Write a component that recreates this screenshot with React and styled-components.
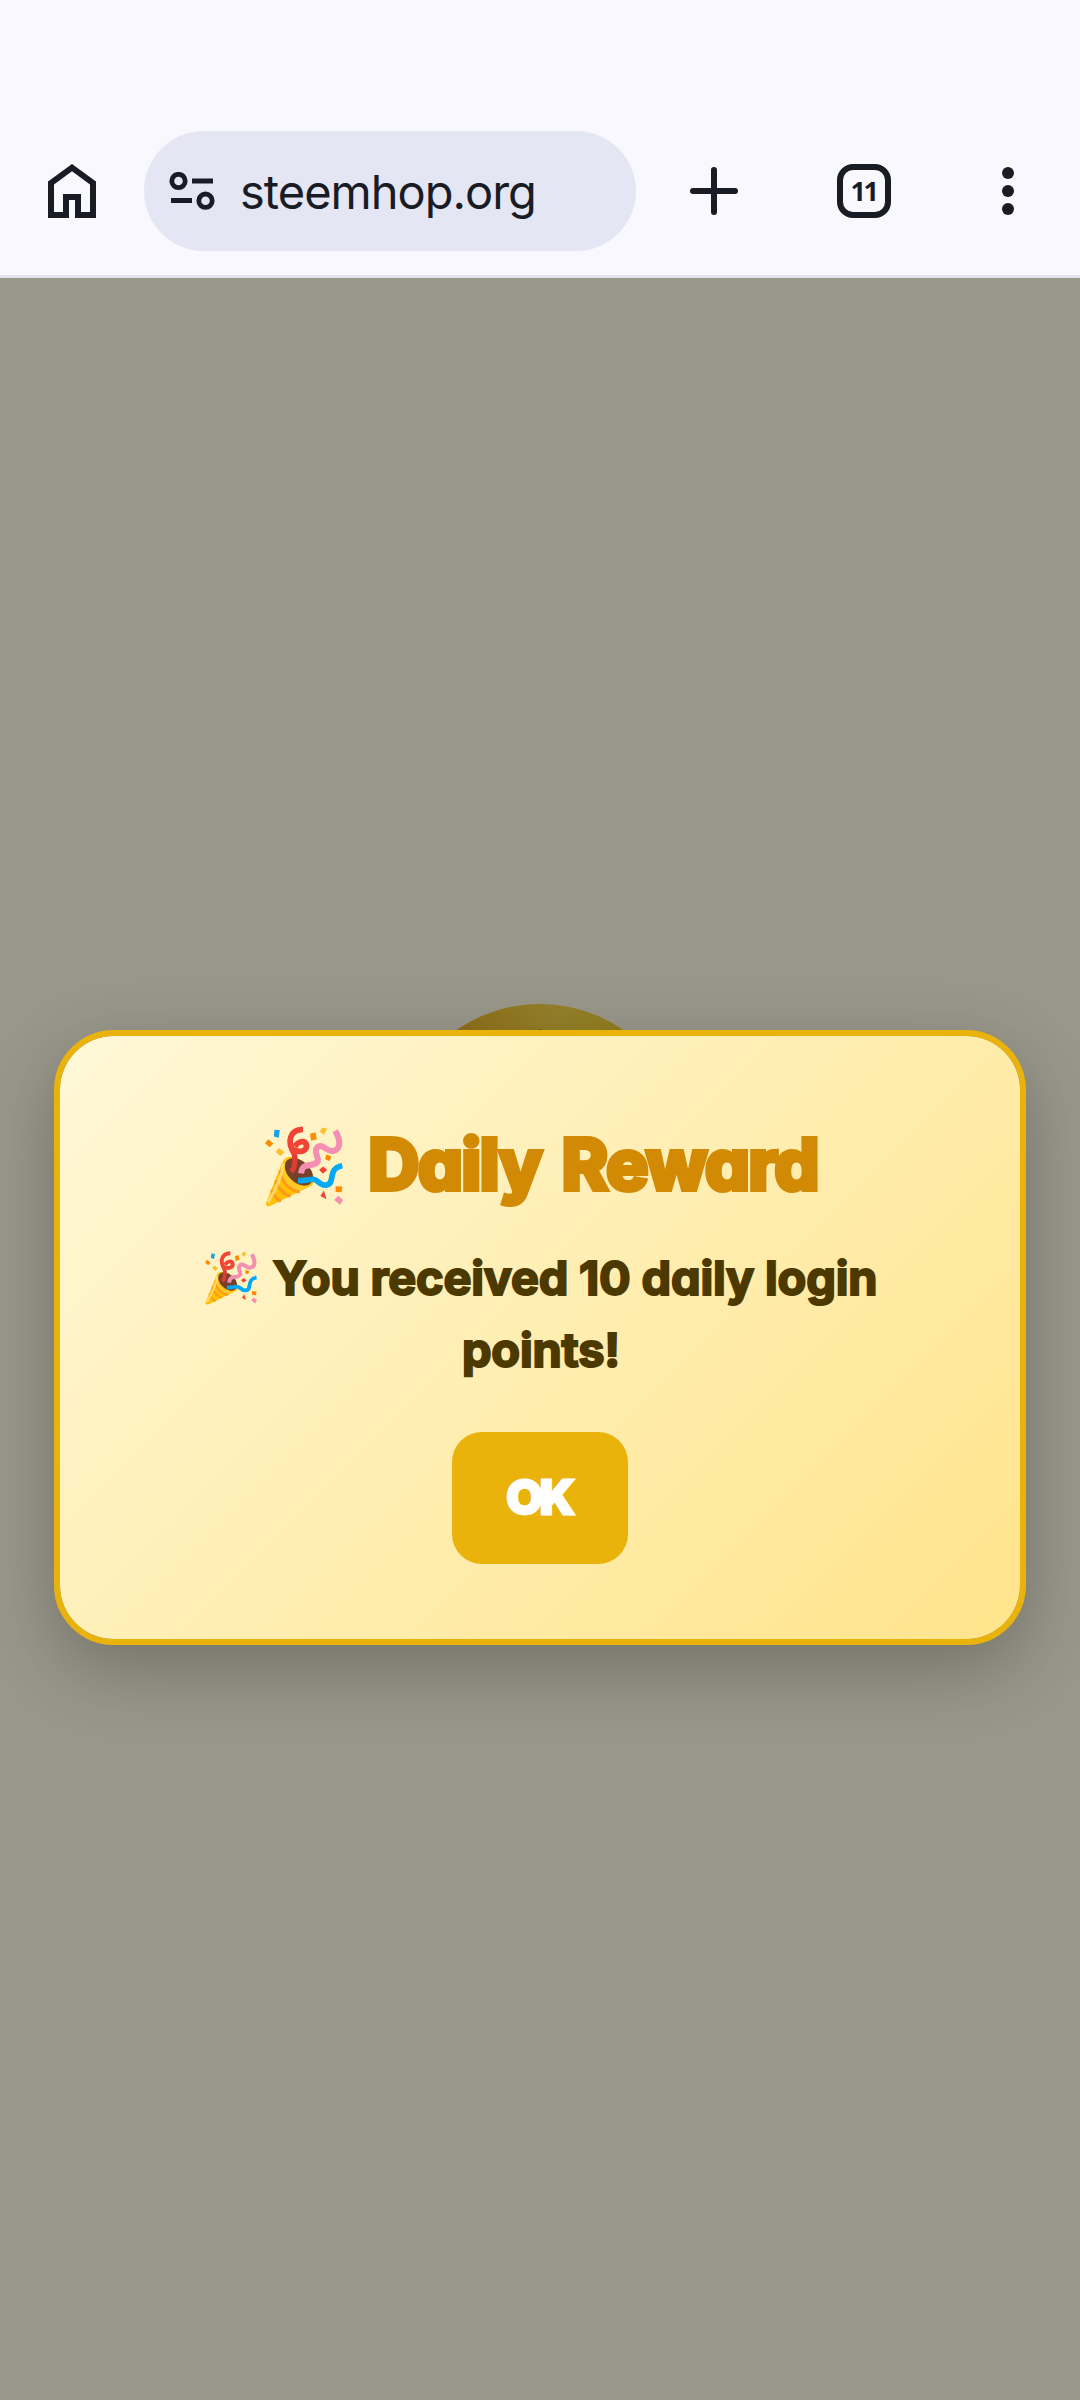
import React from 'react';
import styled, { createGlobalStyle } from 'styled-components';

const GlobalStyle = createGlobalStyle`
  * {
    box-sizing: border-box;
  }

  body {
    margin: 0;
    background: #99978a;
    font-family: Inter, 'Liberation Sans', sans-serif;
  }
`;

const Screen = styled.div`
  width: 1080px;
  height: 2400px;
  display: flex;
  flex-direction: column;
  overflow: hidden;
`;

const BrowserBar = styled.header`
  height: 278px;
  flex-shrink: 0;
  display: flex;
  align-items: center;
  padding: 107px 66px 0 48px;
  background: #f9f8ff;
  border-bottom: 3px solid #e2e2f0;
  color: #191b25;

  svg {
    display: block;
    flex-shrink: 0;
  }
`;

const AddressPill = styled.div`
  width: 492px;
  height: 120px;
  margin: 0 54px 0 48px;
  padding-left: 25px;
  display: flex;
  align-items: center;
  gap: 25px;
  border-radius: 60px;
  background: #e4e6f3;
`;

const Url = styled.span`
  font-size: 47px;
  font-weight: 400;
  line-height: 60px;
  letter-spacing: -1px;
  margin-top: 2px;
`;

const TabCounter = styled.div`
  width: 54px;
  height: 54px;
  margin: 0 111px 0 99px;
  display: flex;
  align-items: center;
  justify-content: center;
  border: 6px solid currentColor;
  border-radius: 16px;
  font-family: 'Open Sans', sans-serif;
  font-size: 27px;
  font-weight: 700;
  line-height: 40px;
  letter-spacing: -2.5px;
  padding: 0 1px 1px 0;
`;

const Page = styled.main`
  position: relative;
  flex: 1;
  display: flex;
  justify-content: center;
  padding-top: 726px;
  background: #99978a;
`;

const Coin = styled.div`
  width: 294px;
  height: 294px;
  padding-top: 25px;
  border-radius: 50%;
  background: linear-gradient(100deg, #8d6a12 10%, #94802a 48%, #917c18 75%);
`;

const CoinMark = styled.div`
  width: 10px;
  height: 10px;
  margin: 0 auto;
  border-radius: 50%;
  background: #84631b;
`;

const Overlay = styled.div`
  position: absolute;
  inset: 0;
  display: flex;
  justify-content: center;
  align-items: flex-start;
  padding-top: 752px;
`;

const Modal = styled.section`
  width: 972px;
  height: 615px;
  padding: 80px 84px 0;
  display: flex;
  flex-direction: column;
  align-items: center;
  border: 6px solid #e9b30b;
  border-radius: 60px;
  background: linear-gradient(135deg, #fff8d8, #ffe48b) padding-box;
  box-shadow: 0 24px 72px rgba(0, 0, 0, 0.24);
`;

const Title = styled.h2`
  display: flex;
  align-items: center;
  gap: 25px;
  margin: 0 0 30px;
  padding-left: 3px;
  color: #d28a05;
  font-size: 71px;
  font-weight: 800;
  line-height: 96px;
  letter-spacing: -1.8px;
  word-spacing: 7px;
  white-space: nowrap;
  font-feature-settings: 'cv11';
  -webkit-text-stroke: 4px #d28a05;

  svg {
    margin-top: 5px;
  }
`;

const Message = styled.p`
  margin: 0 0 46px;
  padding-left: 2px;
  color: #4c3900;
  font-size: 47px;
  font-weight: 700;
  line-height: 72px;
  letter-spacing: -0.2px;
  text-align: center;
  font-feature-settings: 'cv11';
  -webkit-text-stroke: 2px #4c3900;
`;

const MessageLine = styled.span`
  display: flex;
  align-items: center;
  justify-content: center;
  gap: 16px;
  white-space: nowrap;
`;

const OkButton = styled.button`
  width: 176px;
  height: 132px;
  padding: 0 2px 3px 0;
  border: 0;
  border-radius: 30px;
  background: #e9b30b;
  color: #fff;
  font-family: inherit;
  font-size: 47px;
  font-weight: 800;
  letter-spacing: -3px;
  -webkit-text-stroke: 3px #fff;
`;

const HomeIcon = () => (
  <svg width="48" height="54" viewBox="0 0 48 54" fill="currentColor">
    <path
      fillRule="evenodd"
      d="M24 0 48 17.5V54H27V36H21V54H0V17.5ZM24 7.2 6 20.5V48H15V30H33V48H42V20.5Z"
    />
  </svg>
);

const SiteSettingsIcon = () => (
  <svg width="46" height="38" viewBox="0 0 46 38" fill="none" stroke="currentColor" strokeWidth="4.8">
    <circle cx="9.5" cy="9" r="6.7" />
    <circle cx="36.5" cy="28.7" r="6.7" />
    <path d="M23 9H44M2 28.5H23" />
  </svg>
);

const PlusIcon = () => (
  <svg width="48" height="48" viewBox="0 0 48 48" stroke="currentColor" strokeWidth="6" strokeLinecap="round">
    <path d="M24 3V45M3 24H45" />
  </svg>
);

const MenuIcon = () => (
  <svg width="12" height="48" viewBox="0 0 12 48" fill="currentColor">
    <circle cx="6" cy="6" r="6" />
    <circle cx="6" cy="24" r="6" />
    <circle cx="6" cy="42" r="6" />
  </svg>
);

const PartyPopper = ({ size }) => (
  <svg width={size} height={size * 1.04} viewBox="81 79 232 241" fill="none">
    <path
      d="M140 176C152 166 181 171 203 193C224 214 232 244 220 256L96 317C88 320 82 316 84 308L131 190Z"
      fill="#ffc107"
    />
    <path d="M134 190 124 216C126 243 151 272 183 274L211 261C172 262 135 228 134 190Z" fill="#ffca28" />
    <path
      d="M126 211C128 242 152 270 184 275M113 240C117 262 136 283 157 288M101 268C104 283 117 298 128 303"
      stroke="#ff9a16"
      strokeWidth="9"
    />
    <path d="M136 190C132 228 112 270 90 306" stroke="#ffe082" strokeWidth="9" opacity=".8" />
    <ellipse cx="182" cy="215" rx="49" ry="32" transform="rotate(43 182 215)" fill="#75412a" />
    <path d="M159 215C173 198 173 177 166 153" stroke="#e03a35" strokeWidth="16" />
    <path
      d="M170 164C143 124 156 90 194 89M164 148C186 162 209 151 204 134C199 120 180 124 170 140"
      stroke="#f14436"
      strokeWidth="17"
    />
    <path
      d="M188 220C193 184 217 203 235 188C248 178 222 157 236 143C253 127 264 158 284 153C309 148 305 119 290 93"
      stroke="#f48fb1"
      strokeWidth="18"
    />
    <path
      d="M179 241C213 244 222 229 238 244C254 259 274 259 278 240C282 219 282 202 311 197"
      stroke="#03a9f4"
      strokeWidth="17"
    />
    <path d="m109 90 16 1-3 23-15-4Z" fill="#1ba2e6" />
    <path d="m91 118 15 13-11 11-14-12ZM215 101l16-3 4 20-17 5ZM263 164l15 5-4 14-14-5ZM291 258l20 1-2 17-18-1Z" fill="#fb8c00" />
    <path d="m122 144 17 12-12 12-14-12ZM251 83l15 4-10 19-12-11Z" fill="#fbc02d" />
    <path d="m254 199 12 11-13 11-11-12ZM256 271l8 26-18-10Z" fill="#f44336" />
    <path d="m299 286 14 13-9 14-17-14Z" fill="#f48fb1" />
  </svg>
);

const App = () => {
  return (
    <Screen>
      <GlobalStyle />
      <BrowserBar>
        <HomeIcon />
        <AddressPill>
          <SiteSettingsIcon />
          <Url>steemhop.org</Url>
        </AddressPill>
        <PlusIcon />
        <TabCounter>11</TabCounter>
        <MenuIcon />
      </BrowserBar>

      <Page>
        <Coin>
          <CoinMark />
        </Coin>
        <Overlay>
          <Modal>
            <Title>
              <PartyPopper size={78} />
              Daily Reward
            </Title>
            <Message>
              <MessageLine>
                <PartyPopper size={52} />
                You received 10 daily login
              </MessageLine>
              <MessageLine>points!</MessageLine>
            </Message>
            <OkButton>OK</OkButton>
          </Modal>
        </Overlay>
      </Page>
    </Screen>
  );
};

export default App;
